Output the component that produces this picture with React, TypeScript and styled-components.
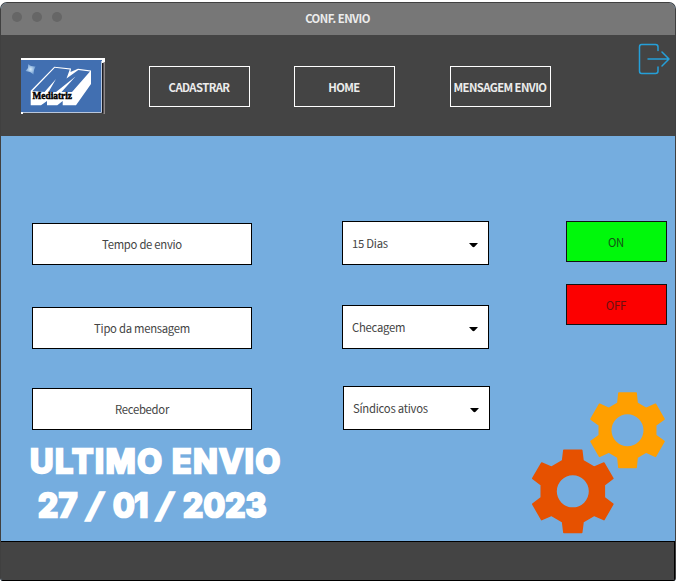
import React from "react";
import styled, { createGlobalStyle } from "styled-components";

const Global = createGlobalStyle`
  * { box-sizing: border-box; }
  html, body { margin: 0; background: #fff; }
  body { font-family: "Noto Sans CJK SC", "Noto Sans", sans-serif; font-size: 12px; overflow: hidden; }
`;

const Window = styled.div`
  width: 676px;
  height: 579px;
  margin-top: 2px;
  display: flex;
  flex-direction: column;
  border: 1px solid #404040;
  border-bottom: 0;
  border-radius: 7px 7px 3px 3px;
  overflow: hidden;
  background: #75addf;
`;

const TitleBar = styled.header`
  height: 32px;
  flex: none;
  display: grid;
  grid-template-columns: 1fr auto 1fr;
  align-items: center;
  background: #777;
  padding: 0 12px 3px 11px;
`;

const Dots = styled.div`
  display: flex;
  gap: 10px;
  margin-top: -2px;
`;

const Dot = styled.i`
  width: 10px;
  height: 10px;
  border-radius: 50%;
  background: #666;
`;

const Title = styled.h1`
  margin: 0;
  font-size: 11.3px;
  line-height: 16px;
  font-weight: 700;
  letter-spacing: -0.55px;
  color: #ececec;
`;

const NavBar = styled.nav`
  height: 101px;
  flex: none;
  display: flex;
  align-items: flex-start;
  background: #444;
  padding-left: 20px;
`;

const Logo = styled.svg`
  width: 85px;
  height: 57px;
  margin-top: 23px;
  flex: none;
`;

const NavButton = styled.button<{ $gap: number }>`
  width: 101px;
  height: 41px;
  margin: 31px 0 0 ${(p) => p.$gap}px;
  padding: 0 1px 0 0;
  flex: none;
  border: 1px solid #fff;
  background: transparent;
  color: #ececec;
  font: inherit;
  font-size: 11.3px;
  font-weight: 700;
  letter-spacing: -0.6px;
  white-space: nowrap;
`;

const ExitIcon = styled.svg`
  width: 34px;
  height: 34px;
  margin: 7px 0 0 85px;
  flex: none;
`;

const Body = styled.main`
  height: 405px;
  flex: none;
  display: grid;
  grid-template-columns: 341px 1fr 145px;
`;

const LabelColumn = styled.section`
  padding: 87px 0 0 31px;
`;

const Label = styled.div<{ $gap?: number }>`
  width: 220px;
  height: 42px;
  margin-top: ${(p) => p.$gap ?? 0}px;
  display: flex;
  align-items: center;
  justify-content: center;
  border: 1px solid #000;
  background: #fff;
  color: #444;
  font-size: 11.3px;
  letter-spacing: -0.28px;
`;

const SelectColumn = styled.section`
  padding-top: 85px;
`;

const SelectBox = styled.button<{ $gap?: number; $shift?: number }>`
  width: 147px;
  height: 44px;
  margin: ${(p) => p.$gap ?? 0}px 0 0 ${(p) => p.$shift ?? 0}px;
  padding: 0 10px 0 9px;
  display: flex;
  align-items: center;
  justify-content: space-between;
  border: 1px solid #000;
  background: #fff;
  color: #444;
  font: inherit;
  font-size: 11.3px;
  letter-spacing: -0.25px;
`;

const Caret = styled.svg`
  width: 9px;
  height: 5px;
  margin-top: 4px;
`;

const ActionColumn = styled.section`
  display: flex;
  flex-direction: column;
  padding: 85px 0 0 36px;
`;

const Toggle = styled.button<{ $color: string; $ink: string; $gap?: number }>`
  width: 101px;
  height: 41px;
  flex: none;
  margin-top: ${(p) => p.$gap ?? 0}px;
  padding: 0 1px 0 0;
  border: 1px solid #111;
  background: ${(p) => p.$color};
  color: ${(p) => p.$ink};
  font: inherit;
  font-size: 11.3px;
  letter-spacing: -0.2px;
`;

const GearArt = styled.svg`
  width: 140px;
  height: 146px;
  margin: 65px 0 0 -36px;
  flex: none;
`;

const LastSend = styled.div`
  margin: 10px 0 0 -2px;
  color: #fff;
  font-family: Inter, sans-serif;
  font-weight: 700;
  font-size: 32px;
  line-height: 44px;
  -webkit-text-stroke: 2.6px #fff;
  stroke-linejoin: round;
`;

const Line = styled.div<{ $indent: number; $gap: number }>`
  display: flex;
  gap: ${(p) => p.$gap}px;
  padding-left: ${(p) => p.$indent}px;
`;

const Word = styled.span<{ $width: number; $spacing: number }>`
  width: ${(p) => p.$width}px;
  letter-spacing: ${(p) => p.$spacing}px;
  white-space: nowrap;
`;

const Slash = styled.span`
  width: 18px;
  text-align: center;
  transform: skewX(-13deg);
`;

const Footer = styled.footer`
  flex: 1;
  border: 1px solid #000;
  border-left: 0;
  background: #444;
`;

type GearProps = { cx: number; cy: number; outer: number; tip: number; base: number; root: number; color: string };

function Gear({ cx, cy, outer, tip, base, root, color }: GearProps) {
  const points = Array.from({ length: 6 }, (_, i) => {
    const a = (i * Math.PI) / 3;
    return [[-base, -root], [-tip, -outer], [tip, -outer], [base, -root]].map(([x, y]) => {
      const px = cx + x * Math.cos(a) - y * Math.sin(a);
      const py = cy + x * Math.sin(a) + y * Math.cos(a);
      return `${px.toFixed(2)} ${py.toFixed(2)}`;
    });
  }).flat();
  const hole = `M${cx - 16.8} ${cy}a16.8 16.8 0 1 0 33.6 0a16.8 16.8 0 1 0 -33.6 0Z`;
  return (
    <path d={`M${points.join("L")}Z${hole}`} fill={color} fillRule="evenodd" stroke={color} strokeWidth="1.6" strokeLinejoin="round" />
  );
}

function Select({ text, gap, shift }: { text: string; gap?: number; shift?: number }) {
  return (
    <SelectBox $gap={gap} $shift={shift}>
      {text}
      <Caret viewBox="0 0 9 5"><path d="M0 0H9L5.8 3.6Q4.5 5 3.2 3.6Z" fill="#000" /></Caret>
    </SelectBox>
  );
}

export default function App() {
  return (
    <>
      <Global />
      <Window>
        <TitleBar>
          <Dots><Dot /><Dot /><Dot /></Dots>
          <Title>CONF. ENVIO</Title>
        </TitleBar>
        <NavBar>
          <Logo viewBox="0 0 85 57">
            <defs>
              <radialGradient id="spark"><stop offset="0" stopColor="#d5ecfc" /><stop offset="1" stopColor="#6f9bd0" /></radialGradient>
            </defs>
            <path d="M0 0H84V5H0Z" fill="#fff" />
            <path d="M81 5H83V55H0V54H81Z" fill="#1c1c22" />
            <path d="M82.5 4H84V56H82.5Z" fill="#8f8888" />
            <path d="M0 2H81V54H0Z" fill="#416fb1" />
            <path d="M80.5 3V54.5H2" fill="none" stroke="#b9c7dc" />
            <path d="M0 54H2V56H0Z" fill="#fff" />
            <path d="M7 6L10 8L14.5 8.5L13 12L12.5 16.5L9 14L4.5 13L7 10Z" fill="url(#spark)" />
            <path d="M9.7 32.7L33.3 8.7L50 10.5L49.5 14L57 10.8L70 12.5V26L55 47.3H41.7V43L36.3 47.3H26V43L20 47.3H9.7Z" fill="#fff" />
            <path d="M11.5 33L33.8 9.7L48.8 11.4L45.5 20.5L57.3 12L69 13.5L51 34H40.5L54.5 18.5L35 34H27.5L35 21L23.5 34Z" fill="#416fb1" />
            <text x="11.5" y="41.3" fontFamily="Liberation Serif, serif" fontSize="10.5" fontWeight="700" fill="#000" stroke="#000" strokeWidth=".5" textLength="39.5" lengthAdjust="spacingAndGlyphs">Mediatriz</text>
          </Logo>
          <NavButton $gap={43}>CADASTRAR</NavButton>
          <NavButton $gap={44}>HOME</NavButton>
          <NavButton $gap={55}>MENSAGEM ENVIO</NavButton>
          <ExitIcon viewBox="0 0 34 34" fill="none" stroke="#259fd8" strokeWidth="1.5" strokeLinejoin="round" strokeLinecap="round">
            <path d="M22 8.5V5Q22 2.5 19.5 2.5H5.5Q3.5 2.5 3.5 5V29Q3.5 31.5 5.5 31.5H19.5Q22 31.5 22 29V25" />
            <path d="M12 17H33M26 10L33 17L26 24" />
          </ExitIcon>
        </NavBar>
        <Body>
          <LabelColumn>
            <Label>Tempo de envio</Label>
            <Label $gap={42}>Tipo da mensagem</Label>
            <Label $gap={39}>Recebedor</Label>
            <LastSend>
              <Line $indent={0} $gap={9}>
                <Word $width={133} $spacing={1.7}>ULTIMO</Word>
                <Word $width={110} $spacing={1.7}>ENVIO</Word>
              </Line>
              <Line $indent={8} $gap={9}>
                <Word $width={39} $spacing={0.5}>27</Word>
                <Slash>/</Slash>
                <Word $width={34} $spacing={0}>01</Word>
                <Slash>/</Slash>
                <Word $width={84} $spacing={0.3}>2023</Word>
              </Line>
            </LastSend>
          </LabelColumn>
          <SelectColumn>
            <Select text="15 Dias" />
            <Select text="Checagem" gap={40} />
            <Select text="Síndicos ativos" gap={37} shift={1} />
          </SelectColumn>
          <ActionColumn>
            <Toggle $color="#00f80b" $ink="#145314">ON</Toggle>
            <Toggle $color="#fc0000" $ink="#6b1010" $gap={22}>OFF</Toggle>
            <GearArt viewBox="530 390 140 146">
              <Gear cx={627.5} cy={430.3} outer={37.2} tip={8.6} base={9.6} root={27} color="#ff9f00" />
              <Gear cx={572.8} cy={491.3} outer={41.1} tip={8.9} base={10.2} root={30.5} color="#e65100" />
            </GearArt>
          </ActionColumn>
        </Body>
        <Footer />
      </Window>
    </>
  );
}
